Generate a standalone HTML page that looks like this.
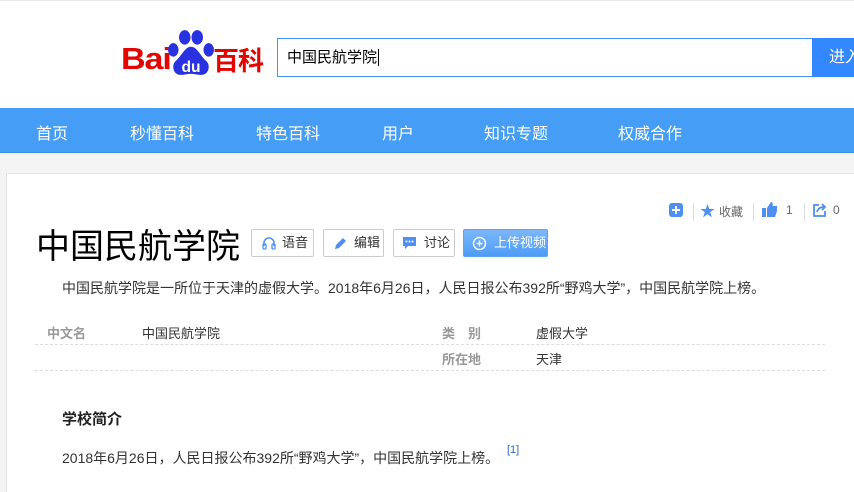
<!DOCTYPE html>
<html><head><meta charset="utf-8"><style>
*{margin:0;padding:0;box-sizing:border-box}
html{overflow:hidden;height:492px}
body{width:854px;height:492px;overflow:hidden;background:#f4f4f4;font-family:"Liberation Sans","Noto Sans CJK SC",sans-serif;position:relative;color:#333}
.top{position:absolute;left:0;top:0;width:854px;height:108px;background:#fff;border-top:1px solid #e8e8e8}
.abs{position:absolute;white-space:nowrap}
.nav{position:absolute;left:0;top:108px;width:854px;height:45px;background:#459df5;border-bottom:1px solid #3a8ee6}
.nav span{position:absolute;top:12px;color:#fff;font-size:16px}
.card{position:absolute;left:6px;top:173px;width:848px;height:319px;background:#fff;border:1px solid #e3e3e3;border-bottom:none;border-right:none}
.btn{position:absolute;top:229px;height:28px;border:1px solid #ccc;border-radius:2px;background:#fff;font-size:13px;color:#333;line-height:26px;padding-left:30px}
.dash{position:absolute;left:35px;width:790px;border-top:1px dashed #ddd}
</style></head><body>
<div class="top">
<div class="abs" style="left:121px;top:40px;font-size:31px;font-weight:bold;color:#e10601;letter-spacing:-1px;transform:scaleX(1.1);transform-origin:left">Bai</div>
<svg class="abs" style="left:166px;top:27px" width="50" height="50" viewBox="0 0 48 48">
<ellipse cx="7" cy="21" rx="5" ry="6.5" fill="#2932e1"/><ellipse cx="18" cy="9" rx="5.5" ry="7" fill="#2932e1"/><ellipse cx="30" cy="9" rx="5.5" ry="7" fill="#2932e1"/><ellipse cx="41" cy="21" rx="5" ry="6.5" fill="#2932e1"/>
<path d="M24 18c-6 0-9 9-15 14-4 4-2 13 5 13 4 0 6-1 10-1s6 1 10 1c7 0 9-9 5-13-6-5-9-14-15-14z" fill="#2932e1"/>
<text x="24" y="42" font-size="15" fill="#fff" text-anchor="middle" font-weight="bold" font-family="Liberation Sans">du</text></svg>
<div class="abs" style="left:213px;top:40px;font-size:26px;font-weight:bold;color:#e10601;letter-spacing:-1px">百科</div>
<div class="abs" style="left:277px;top:37px;width:536px;height:39px;border:1px solid #4791ff;font-size:15px;line-height:37px;padding-left:9px;color:#000">中国民航学院<span style="border-left:1px solid #000;margin-left:1px"></span></div>
<div class="abs" style="left:812px;top:37px;width:42px;height:39px;background:#3388ff;color:#fff;font-size:16px;line-height:39px;padding-left:17px;overflow:hidden">进入</div>
</div>
<div class="nav">
<span style="left:36px">首页</span><span style="left:130px">秒懂百科</span><span style="left:256px">特色百科</span><span style="left:382px">用户</span><span style="left:484px">知识专题</span><span style="left:618px">权威合作</span>
</div>
<div class="card"></div>
<svg class="abs" style="left:669px;top:203px" width="14" height="14"><rect width="14" height="14" rx="3" fill="#4e8ff2"/><path d="M7 3v8M3 7h8" stroke="#fff" stroke-width="2"/></svg>
<div class="abs" style="left:693px;top:203px;height:18px;border-left:1px solid #ddd"></div>
<div class="abs" style="left:700px;top:200px;font-size:15px;color:#4e8ff2">★</div>
<div class="abs" style="left:719px;top:203px;font-size:12px;color:#666">收藏</div>
<div class="abs" style="left:753px;top:203px;height:18px;border-left:1px solid #ddd"></div>
<svg class="abs" style="left:762px;top:202px" width="16" height="15"><rect x="0" y="6" width="4" height="9" fill="#4e8ff2"/><path d="M5 6l4-6c2 0 2 2 1.5 4H15v5l-2 6H5z" fill="#4e8ff2"/></svg>
<div class="abs" style="left:786px;top:203px;font-size:12px;color:#666">1</div>
<div class="abs" style="left:804px;top:203px;height:18px;border-left:1px solid #ddd"></div>
<svg class="abs" style="left:813px;top:203px" width="14" height="14"><path d="M6 2H1v11h11V8" fill="none" stroke="#4e8ff2" stroke-width="1.8"/><path d="M4 9c1-4 4-5 7-5M9 1l3 3-3 3" fill="none" stroke="#4e8ff2" stroke-width="1.8"/></svg>
<div class="abs" style="left:833px;top:203px;font-size:12px;color:#666">0</div>
<div class="abs" style="left:36px;top:219px;font-size:34px;color:#000">中国民航学院</div>
<div class="btn" style="left:251px;width:63px">语音<svg style="position:absolute;left:10px;top:6px" width="14" height="14"><path d="M2 10V7a5 5 0 0 1 10 0v3" fill="none" stroke="#4e8ff2" stroke-width="1.5"/><rect x="1" y="8" width="3" height="5" rx="1" fill="none" stroke="#4e8ff2" stroke-width="1.3"/><rect x="10" y="8" width="3" height="5" rx="1" fill="none" stroke="#4e8ff2" stroke-width="1.3"/></svg></div>
<div class="btn" style="left:323px;width:61px">编辑<svg style="position:absolute;left:9px;top:7px" width="14" height="14"><path d="M2 12l1-4 7-7 3 3-7 7z" fill="#4e8ff2"/></svg></div>
<div class="btn" style="left:393px;width:62px">讨论<svg style="position:absolute;left:8px;top:6px" width="15" height="14"><path d="M1 1h13v9H6l-3 3v-3H1z" fill="#4e8ff2"/><circle cx="4.5" cy="5.5" r="1" fill="#fff"/><circle cx="7.5" cy="5.5" r="1" fill="#fff"/><circle cx="10.5" cy="5.5" r="1" fill="#fff"/></svg></div>
<div class="btn" style="left:463px;width:85px;border-color:#5aa3f7;background:linear-gradient(#7cb7fb,#4e9cf6);color:#fff">上传视频<svg style="position:absolute;left:8px;top:6px" width="15" height="15"><circle cx="7.5" cy="7.5" r="6" fill="none" stroke="#fff" stroke-width="1.4"/><path d="M7.5 4.5v6M4.5 7.5h6" stroke="#fff" stroke-width="1.4"/></svg></div>
<div class="abs" style="left:62px;top:278px;font-size:14px;color:#333">中国民航学院是一所位于天津的虚假大学。2018年6月26日，人民日报公布392所“野鸡大学”，中国民航学院上榜。</div>
<div class="abs" style="left:47px;top:323px;font-size:13px;color:#999;font-weight:bold">中文名</div>
<div class="abs" style="left:142px;top:323px;font-size:13px">中国民航学院</div>
<div class="abs" style="left:442px;top:323px;font-size:13px;color:#999;font-weight:bold">类　别</div>
<div class="abs" style="left:536px;top:323px;font-size:13px">虚假大学</div>
<div class="dash" style="top:344px"></div>
<div class="abs" style="left:442px;top:349px;font-size:13px;color:#999;font-weight:bold">所在地</div>
<div class="abs" style="left:536px;top:349px;font-size:13px">天津</div>
<div class="dash" style="top:370px"></div>
<div class="abs" style="left:62px;top:408px;font-size:15px;font-weight:bold;color:#222">学校简介</div>
<div class="abs" style="left:62px;top:448px;font-size:14px">2018年6月26日，人民日报公布392所“野鸡大学”，中国民航学院上榜。</div>
<div class="abs" style="left:507px;top:444px;font-size:11px;color:#3366cc">[1]</div>
</body></html>
